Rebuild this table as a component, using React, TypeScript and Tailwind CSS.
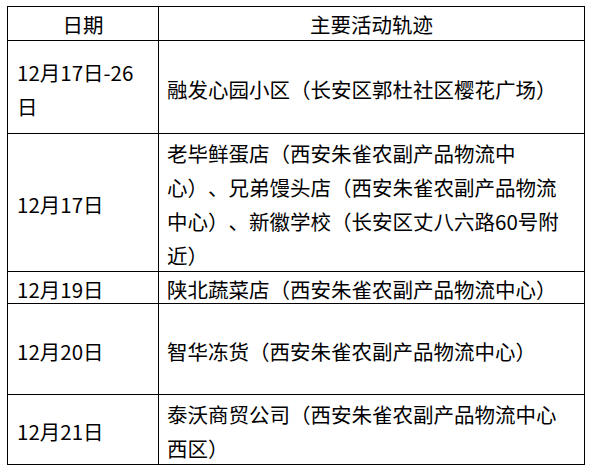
const rows = [
  { date: "12月17日-26日", place: "融发心园小区（长安区郭杜社区樱花广场）", h: "h-[93px]" },
  {
    date: "12月17日",
    place: "老毕鲜蛋店（西安朱雀农副产品物流中心）、兄弟馒头店（西安朱雀农副产品物流中心）、新徽学校（长安区丈八六路60号附近）",
    h: "h-[138px]",
  },
  { date: "12月19日", place: "陕北蔬菜店（西安朱雀农副产品物流中心）", h: "h-[32px]" },
  { date: "12月20日", place: "智华冻货（西安朱雀农副产品物流中心）", h: "h-[91px]" },
  { date: "12月21日", place: "泰沃商贸公司（西安朱雀农副产品物流中心西区）", h: "h-[70px]" },
];

export default function App() {
  return (
    <div
      className="w-[593px] h-[471px] bg-white pl-[7px] pt-[6px] text-[20.5px] leading-[34px] text-black [text-spacing-trim:space-all]"
      style={{ fontFamily: '"Noto Sans CJK SC", "Noto Sans", sans-serif' }}
    >
      <div className="grid w-[578px] grid-cols-[151px_426px] border-l border-t border-black">
        {/* header */}
        <div className="flex h-[34px] items-center justify-center border-r border-b border-black">日期</div>
        <div className="flex h-[34px] items-center justify-center border-r border-b border-black">主要活动轨迹</div>

        {rows.map((r, k) => (
          <div key={k} className="contents">
            <div className={`${r.h} flex items-center border-r border-b border-black pl-[9px] pr-[9px]`}>
              <p className="pt-[3px]">{r.date}</p>
            </div>
            <div className={`${r.h} flex items-center border-r border-b border-black pl-[8px] pr-[9px]`}>
              <p className="pt-[3px]">{r.place}</p>
            </div>
          </div>
        ))}
      </div>
    </div>
  );
}
